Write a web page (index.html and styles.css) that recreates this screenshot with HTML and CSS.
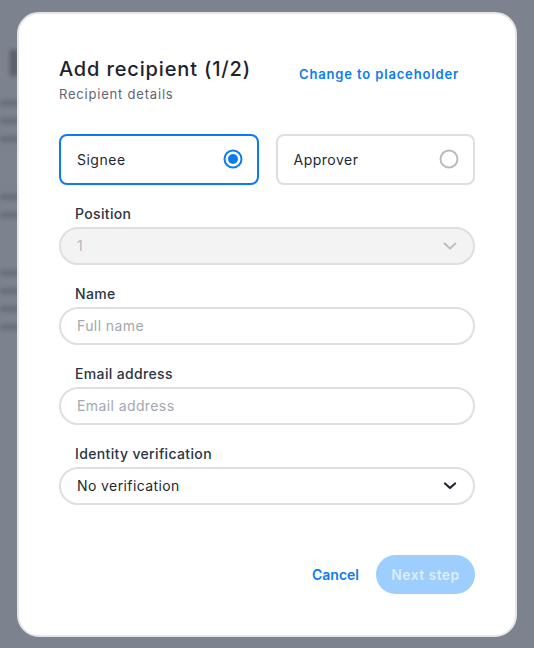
FILE: index.html
```html
<!DOCTYPE html>
<html lang="en">
<head>
    <meta charset="UTF-8">
    <meta name="viewport" content="width=device-width, initial-scale=1.0">
    <title>Add recipient</title>
    <link rel="stylesheet" href="styles.css">
</head>
<body>
    <div class="backdrop">
        <div class="bg-heading"></div>
        <div class="bg-line w1"></div>
        <div class="bg-line w2"></div>
        <div class="bg-line w3"></div>
        <div class="bg-gap"></div>
        <div class="bg-line w2"></div>
        <div class="bg-line w1"></div>
        <div class="bg-gap"></div>
        <div class="bg-line w3"></div>
        <div class="bg-line w2"></div>
        <div class="bg-line w1"></div>
        <div class="bg-line w3"></div>
    </div>

    <div class="modal">
        <div class="modal-header">
            <div>
                <h1 class="modal-title">Add recipient (1/2)</h1>
                <p class="modal-subtitle">Recipient details</p>
            </div>
            <a class="link" href="#">Change to placeholder</a>
        </div>

        <div class="role-options">
            <label class="role-card selected">
                <span>Signee</span>
                <svg width="20" height="20" viewBox="0 0 20 20">
                    <circle cx="10" cy="10" r="8.5" fill="none" stroke="#0b7cf0" stroke-width="2"/>
                    <circle cx="10" cy="10" r="5" fill="#0b7cf0"/>
                </svg>
            </label>
            <label class="role-card">
                <span>Approver</span>
                <svg width="20" height="20" viewBox="0 0 20 20">
                    <circle cx="10" cy="10" r="8.5" fill="none" stroke="#b8bcc2" stroke-width="2"/>
                </svg>
            </label>
        </div>

        <div class="fields">
            <div class="field">
                <div class="field-label">Position</div>
                <div class="control disabled">
                    <span>1</span>
                    <svg width="14" height="8" viewBox="0 0 14 8">
                        <path d="M1.5 1.5 L7 6.5 L12.5 1.5" fill="none" stroke="#b9bdc3" stroke-width="1.8" stroke-linecap="round" stroke-linejoin="round"/>
                    </svg>
                </div>
            </div>
            <div class="field">
                <div class="field-label">Name</div>
                <input class="control" type="text" placeholder="Full name">
            </div>
            <div class="field">
                <div class="field-label">Email address</div>
                <input class="control" type="text" placeholder="Email address">
            </div>
            <div class="field">
                <div class="field-label">Identity verification</div>
                <div class="control">
                    <span>No verification</span>
                    <svg width="14" height="8" viewBox="0 0 14 8">
                        <path d="M2 1.5 L7 6 L12 1.5" fill="none" stroke="#1f2733" stroke-width="2.2" stroke-linecap="round" stroke-linejoin="round"/>
                    </svg>
                </div>
            </div>
        </div>

        <div class="modal-footer">
            <button class="btn-text">Cancel</button>
            <button class="btn-primary" disabled>Next step</button>
        </div>
    </div>
</body>
</html>
```

FILE: styles.css
```css
body {
    font-family: Inter, "Open Sans", sans-serif;
    letter-spacing: 0.35px;
    margin: 0;
    padding: 0;
    background-color: #7c828e;
    color: #1f2733;
    display: flex;
    justify-content: center;
    align-items: center;
    height: 100vh;
    overflow: hidden;
}
.backdrop {
    position: fixed;
    top: 0;
    left: 0;
    right: 0;
    bottom: 0;
    padding: 50px 0 0 0;
    filter: blur(2px);
    opacity: 0.3;
}
.bg-heading {
    width: 8px;
    height: 26px;
    margin: 0 0 24px 10px;
    background-color: #0f1217;
}
.bg-line {
    height: 6px;
    background-color: #3a404a;
    margin-bottom: 12px;
    border-radius: 3px;
}
.bg-line.w1 { width: 120px; }
.bg-line.w2 { width: 90px; }
.bg-line.w3 { width: 60px; }
.bg-gap {
    height: 40px;
}
.modal {
    position: relative;
    width: 500px;
    height: 625px;
    box-sizing: border-box;
    background-color: #fff;
    border: 2px solid #e3e5e9;
    border-radius: 22px;
    padding: 43px 40px 41px;
    display: flex;
    flex-direction: column;
}
.modal-header {
    display: flex;
    justify-content: space-between;
    align-items: flex-start;
}
.modal-title {
    font-size: 20px;
    line-height: 24px;
    font-weight: 500;
    letter-spacing: 0.85px;
    margin: 0;
    color: #1d232c;
}
.modal-subtitle {
    font-size: 13px;
    line-height: 16px;
    letter-spacing: 0.8px;
    margin: 5px 0 0;
    color: #5f6672;
}
.link {
    font-size: 13px;
    line-height: 16px;
    font-weight: 600;
    letter-spacing: 0.85px;
    color: #0b7cf0;
    text-decoration: none;
    margin: 9px 16px 0 0;
}
.role-options {
    display: flex;
    gap: 17px;
    margin-top: 32px;
}
.role-card {
    flex: 1;
    height: 51px;
    box-sizing: border-box;
    border: 2px solid #dcdfe3;
    border-radius: 8px;
    padding: 0 14px 0 16px;
    display: flex;
    align-items: center;
    justify-content: space-between;
    font-size: 14px;
    letter-spacing: 0.5px;
    color: #1f2733;
}
.role-card.selected {
    border-color: #0b7cf0;
}
.fields {
    display: flex;
    flex-direction: column;
    gap: 20px;
    margin-top: 20px;
}
.field {
    display: flex;
    flex-direction: column;
    gap: 5px;
}
.field-label {
    font-size: 14px;
    line-height: 17px;
    font-weight: 500;
    color: #2b3443;
    padding-left: 16px;
}
.control {
    height: 38px;
    box-sizing: border-box;
    border: 2px solid #dcdfe3;
    border-radius: 19px;
    padding: 0 16px;
    font-family: inherit;
    font-size: 14px;
    letter-spacing: 0.4px;
    color: #1f2733;
    background-color: #fff;
    display: flex;
    align-items: center;
    justify-content: space-between;
    outline: none;
    width: 100%;
    margin: 0;
}
.control::placeholder {
    color: #a3a8b0;
}
.control.disabled {
    background-color: #f3f3f4;
    color: #b4b8bf;
}
.modal-footer {
    margin-top: auto;
    display: flex;
    justify-content: flex-end;
    align-items: center;
    gap: 17px;
}
.btn-text {
    background: none;
    border: none;
    padding: 0;
    font-family: inherit;
    font-size: 14px;
    font-weight: 600;
    letter-spacing: 0;
    color: #0b7cf0;
    cursor: pointer;
}
.btn-primary {
    height: 39px;
    width: 99px;
    padding: 0;
    border: none;
    border-radius: 20px;
    background-color: #9dcefd;
    color: #dcedfe;
    font-family: inherit;
    font-size: 14px;
    font-weight: 600;
    letter-spacing: 0.4px;
}
```
